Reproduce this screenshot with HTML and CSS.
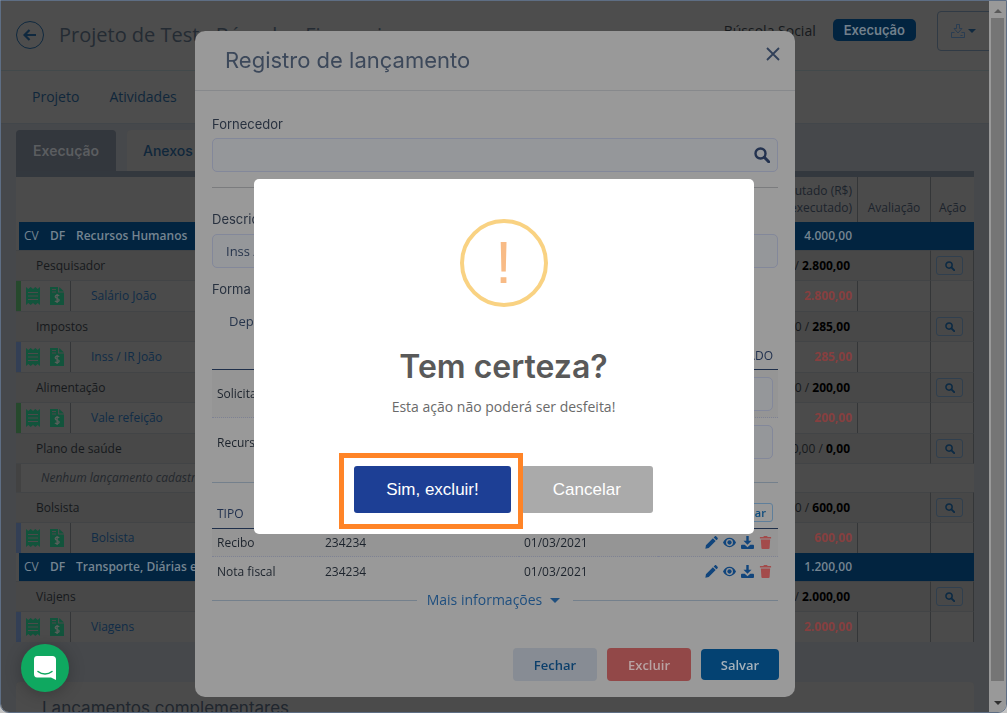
FILE: index.html
```html
<!DOCTYPE html>
<html lang="pt-BR">
<head>
    <meta charset="UTF-8">
    <meta name="viewport" content="width=device-width, initial-scale=1.0">
    <title>Registro de lançamento</title>
    <link rel="stylesheet" href="styles.css">
</head>
<body>
    <!-- Icons used more than once -->
    <svg class="sprite" aria-hidden="true">
        <symbol id="i-search" viewBox="0 0 16 16"><circle cx="6.5" cy="6.5" r="5" fill="none" stroke="currentColor" stroke-width="2.4"/><path d="M10.3 10.3l4.4 4.4" stroke="currentColor" stroke-width="3" stroke-linecap="round"/></symbol>
        <symbol id="i-receipt" viewBox="0 0 14 18"><path fill="currentColor" d="M0 0l2.300 2L4.700 0 7 2 9.300 0l2.400 2L14 0v18l-2.300-2-2.400 2L7 16l-2.300 2-2.400-2L0 18z"/><path d="M2 5.500h10M2 9h10M2 12.500h10" stroke="#4b4b4b" stroke-width="1.200"/></symbol>
        <symbol id="i-invoice" viewBox="0 0 14 18"><path fill="currentColor" d="M0 0h8v5.500h6V18H0z"/><path fill="currentColor" d="M9.200 0L14 4.400H9.200z"/><path d="M2 2.500h4M2 5h4" stroke="#494949" stroke-width="1.100"/><path d="M9.200 8.700C8.300 7.700 5.200 7.900 5.200 9.800c0 2 4 1.400 4 3.300 0 1.800-3.200 2-4.300.7M7.100 7v9" fill="none" stroke="#5a5f5c" stroke-width="1.300"/></symbol>
        <symbol id="i-pencil" viewBox="0 0 14 14"><path fill="currentColor" d="M1 10l7.500-7.500 3 3L4 13l-3.600.6zM9.300 1.700L10.500.5c.5-.5 1.200-.5 1.700 0l1.300 1.300c.5.5.5 1.200 0 1.700l-1.200 1.200z"/></symbol>
        <symbol id="i-eye" viewBox="0 0 14 12"><path fill="currentColor" fill-rule="evenodd" d="M7 1c3 0 5.500 2 7 5-1.500 3-4 5-7 5S1.500 9 0 6c1.500-3 4-5 7-5zm0 1.300a3.700 3.700 0 100 7.400 3.700 3.700 0 000-7.400z"/><circle cx="7" cy="6" r="2.300" fill="currentColor"/></symbol>
        <symbol id="i-download" viewBox="0 0 14 14"><path fill="currentColor" d="M5.700 0h2.600v5h3L7 9.500 2.700 5h3zM1 9.500h3L7 12l3-2.500h3c.6 0 1 .4 1 1V13c0 .6-.4 1-1 1H1c-.6 0-1-.4-1-1v-2.500c0-.6.4-1 1-1z"/></symbol>
        <symbol id="i-trash" viewBox="0 0 12 14"><path fill="currentColor" d="M0 1h3.700L4.300 0h3.400l.6 1H12v1.800H0zM1 3.800h10L10.400 13c0 .6-.5 1-1 1H2.600c-.6 0-1-.4-1-1z"/></symbol>
    </svg>

    <div class="window">
        <main class="page">
            <header class="topbar">
                <button class="back" aria-label="Voltar">
                    <svg width="14" height="12" viewBox="0 0 14 12"><path d="M13 6H2M6.500 1L1.500 6l5 5" fill="none" stroke="currentColor" stroke-width="2.200"/></svg>
                </button>
                <h1>Projeto de Teste Bússola - Financeiro</h1>
                <span class="org">Bússola Social</span>
                <span class="badge">Execução</span>
                <button class="export" aria-label="Exportar">
                    <svg width="14" height="14" viewBox="0 0 14 14"><path d="M5.500.5h3v4h2.500L7 9 3 4.500h2.500zM3.500 8.500h-3v5h13v-5h-3M9.500 11.500h2" fill="none" stroke="#2a3d52"/></svg>
                    <span class="caret"></span>
                </button>
            </header>
            <nav class="menu">
                <a href="#">Projeto</a>
                <a href="#">Atividades</a>
            </nav>
            <section class="content">
                <div class="tabs">
                    <button class="tab active">Execução</button>
                    <button class="tab">Anexos</button>
                </div>
                <table class="budget">
                    <colgroup>
                        <col class="c-mark"><col class="c-cv"><col class="c-df"><col><col class="c-exec"><col class="c-aval"><col class="c-acao">
                    </colgroup>
                    <thead>
                        <tr>
                            <th colspan="4"></th>
                            <th class="num">Executado (R$)<br>(Disponível / executado)</th>
                            <th>Avaliação</th>
                            <th>Ação</th>
                        </tr>
                    </thead>
                    <tbody>
                        <tr class="category"><td></td><td>CV</td><td><b>DF</b></td><td><b>Recursos Humanos</b></td><td class="num"><b>4.000,00</b></td><td></td><td></td></tr>
                        <tr class="group"><td></td><td colspan="3">Pesquisador</td><td class="num">0,00 / <b>2.800,00</b></td><td></td><td><button class="view" aria-label="Ver"><svg><use href="#i-search"/></svg></button></td></tr>
                        <tr class="entry"><td class="green"></td><td><svg><use href="#i-receipt"/></svg></td><td><svg><use href="#i-invoice"/></svg></td><td><a href="#">Salário João</a></td><td class="num">2.800,00</td><td></td><td></td></tr>
                        <tr class="group"><td></td><td colspan="3">Impostos</td><td class="num">0,00 / <b>285,00</b></td><td></td><td><button class="view" aria-label="Ver"><svg><use href="#i-search"/></svg></button></td></tr>
                        <tr class="entry"><td class="blue"></td><td><svg><use href="#i-receipt"/></svg></td><td><svg><use href="#i-invoice"/></svg></td><td><a href="#">Inss / IR João</a></td><td class="num">285,00</td><td></td><td></td></tr>
                        <tr class="group"><td></td><td colspan="3">Alimentação</td><td class="num">0,00 / <b>200,00</b></td><td></td><td><button class="view" aria-label="Ver"><svg><use href="#i-search"/></svg></button></td></tr>
                        <tr class="entry"><td class="green"></td><td><svg><use href="#i-receipt"/></svg></td><td><svg><use href="#i-invoice"/></svg></td><td><a href="#">Vale refeição</a></td><td class="num">200,00</td><td></td><td></td></tr>
                        <tr class="group"><td></td><td colspan="3">Plano de saúde</td><td class="num">0,00 / <b>0,00</b></td><td></td><td><button class="view" aria-label="Ver"><svg><use href="#i-search"/></svg></button></td></tr>
                        <tr class="empty"><td></td><td colspan="6">Nenhum lançamento cadastrado</td></tr>
                        <tr class="group"><td></td><td colspan="3">Bolsista</td><td class="num">0,00 / <b>600,00</b></td><td></td><td><button class="view" aria-label="Ver"><svg><use href="#i-search"/></svg></button></td></tr>
                        <tr class="entry"><td class="blue"></td><td><svg><use href="#i-receipt"/></svg></td><td><svg><use href="#i-invoice"/></svg></td><td><a href="#">Bolsista</a></td><td class="num">600,00</td><td></td><td></td></tr>
                        <tr class="category"><td></td><td>CV</td><td><b>DF</b></td><td><b>Transporte, Diárias e Viagens</b></td><td class="num"><b>1.200,00</b></td><td></td><td></td></tr>
                        <tr class="group"><td></td><td colspan="3">Viajens</td><td class="num">0,00 / <b>2.000,00</b></td><td></td><td><button class="view" aria-label="Ver"><svg><use href="#i-search"/></svg></button></td></tr>
                        <tr class="entry"><td class="blue"></td><td><svg><use href="#i-receipt"/></svg></td><td><svg><use href="#i-invoice"/></svg></td><td><a href="#">Viagens</a></td><td class="num">2.000,00</td><td></td><td></td></tr>
                    </tbody>
                </table>
                <h2 class="extra">Lançamentos complementares</h2>
            </section>
        </main>
        <div class="scrollbar">
            <span class="arrow up"></span>
            <span class="thumb"></span>
            <span class="arrow down"></span>
        </div>
    </div>

    <!-- Entry form -->
    <div class="modal-layer">
        <form class="modal">
            <div class="modal-header">
                <h2>Registro de lançamento</h2>
                <button type="button" class="close" aria-label="Fechar janela">
                    <svg width="14" height="14" viewBox="0 0 14 14"><path d="M1 1l12 12M13 1L1 13" stroke="currentColor" stroke-width="1.800"/></svg>
                </button>
            </div>
            <div class="modal-body">
                <label for="fornecedor">Fornecedor</label>
                <div class="search-field">
                    <input type="text" id="fornecedor">
                    <button type="button" aria-label="Buscar fornecedor"><svg><use href="#i-search"/></svg></button>
                </div>
                <hr>
                <label for="descricao">Descrição</label>
                <input type="text" id="descricao" value="Inss / IR João">
                <label for="forma" class="forma-label">Forma de pagamento</label>
                <select id="forma"><option>Depósito</option></select>
                <table class="sources">
                    <thead><tr><th></th><th>EXECUTADO</th></tr></thead>
                    <tbody>
                        <tr><td><label for="solicitado">Solicitado</label></td><td><input type="text" id="solicitado"></td></tr>
                        <tr><td><label for="recursos">Recursos próprios</label></td><td><input type="text" id="recursos"></td></tr>
                    </tbody>
                </table>
                <hr class="hr-blue">
                <table class="docs">
                    <thead><tr><th class="d-tipo">TIPO</th><th class="d-num">NÚMERO</th><th>DATA</th><th class="d-act"><button type="button" class="add">Adicionar</button></th></tr></thead>
                    <tbody>
                        <tr>
                            <td>Recibo</td><td>234234</td><td>01/03/2021</td>
                            <td class="actions">
                                <div>
                                    <button type="button" aria-label="Editar"><svg><use href="#i-pencil"/></svg></button>
                                    <button type="button" aria-label="Ver"><svg><use href="#i-eye"/></svg></button>
                                    <button type="button" aria-label="Baixar"><svg><use href="#i-download"/></svg></button>
                                    <button type="button" class="red" aria-label="Excluir"><svg><use href="#i-trash"/></svg></button>
                                </div>
                            </td>
                        </tr>
                        <tr>
                            <td>Nota fiscal</td><td>234234</td><td>01/03/2021</td>
                            <td class="actions">
                                <div>
                                    <button type="button" aria-label="Editar"><svg><use href="#i-pencil"/></svg></button>
                                    <button type="button" aria-label="Ver"><svg><use href="#i-eye"/></svg></button>
                                    <button type="button" aria-label="Baixar"><svg><use href="#i-download"/></svg></button>
                                    <button type="button" class="red" aria-label="Excluir"><svg><use href="#i-trash"/></svg></button>
                                </div>
                            </td>
                        </tr>
                    </tbody>
                </table>
                <a href="#" class="more">Mais informações <span class="caret"></span></a>
            </div>
            <div class="modal-footer">
                <button type="button" class="btn light">Fechar</button>
                <button type="button" class="btn danger">Excluir</button>
                <button type="button" class="btn primary">Salvar</button>
            </div>
        </form>
    </div>

    <!-- Confirmation -->
    <div class="alert-layer">
        <div class="alert" role="alertdialog" aria-labelledby="alert-title">
            <div class="alert-icon">!</div>
            <h2 id="alert-title">Tem certeza?</h2>
            <p>Esta ação não poderá ser desfeita!</p>
            <div class="alert-buttons">
                <span class="marked"><button class="confirm">Sim, excluir!</button></span>
                <button class="cancel">Cancelar</button>
            </div>
        </div>
    </div>

    <button class="chat" aria-label="Abrir chat">
        <svg width="24" height="26" viewBox="0 0 24 26"><path fill="#fff" d="M4 1h15.500C21.500 1 23 2.500 23 4.500V25l-5-2.500H4C2 22.500 1 21 1 19V4.500C1 2.500 2 1 4 1z"/><path d="M5 16.500c4 3.200 10 3.200 14 0" fill="none" stroke="#0fa860" stroke-width="1.500" stroke-linecap="round"/></svg>
    </button>
</body>
</html>
```
FILE: styles.css
```css
* {
    box-sizing: border-box;
}
body {
    margin: 0;
    height: 100vh;
    overflow: hidden;
    background: #c4c4c4;
    font-family: "Open Sans", sans-serif;
    font-size: 12px;
    color: #16191c;
}
h1, h2, p {
    margin: 0;
    font-weight: 400;
}
button {
    font-family: inherit;
    padding: 0;
    border: 0;
    background: none;
    cursor: pointer;
}
a {
    text-decoration: none;
}
.sprite {
    position: absolute;
    width: 0;
    height: 0;
}
.caret {
    border: 5px solid transparent;
    border-top-color: currentColor;
    border-bottom: 0;
}

/* Window */
.window {
    display: flex;
    height: 100vh;
    border: 1px solid #5e6e84;
    border-radius: 0 0 9px 9px;
    overflow: hidden;
}
.page {
    flex: 1;
    min-width: 0;
    overflow: hidden;
    background: #46484b;
}
.scrollbar {
    display: flex;
    flex-direction: column;
    align-items: center;
    width: 17px;
    padding: 0 2px;
    background: #999;
}
.scrollbar .thumb {
    flex: 1;
    width: 100%;
    background: #757575;
}
.arrow {
    border: 4px solid transparent;
}
.arrow.up {
    margin: 8px 0 5px;
    border-top: 0;
    border-bottom-color: #5a5a5a;
}
.arrow.down {
    margin: 20px 0 7px;
    border-bottom: 0;
    border-top-color: #303030;
}

/* Page header */
.topbar {
    display: flex;
    align-items: center;
    height: 70px;
    padding: 0 0 2px 15px;
    overflow: hidden;
    background: #4d4d4d;
    border-bottom: 1px solid #42494b;
}
.topbar > * {
    flex-shrink: 0;
}
.back {
    display: flex;
    align-items: center;
    justify-content: center;
    width: 28px;
    height: 28px;
    border: 1px solid #10293f;
    border-radius: 50%;
    color: #10293f;
}
.topbar h1 {
    flex: 1;
    margin-left: 15px;
    font-size: 20px;
    color: #242b33;
}
.org {
    margin-bottom: 9px;
    font-size: 14px;
    color: #16191c;
}
.badge {
    margin: 0 21px 9px 17px;
    padding: 0 11px;
    line-height: 22px;
    border-radius: 5px;
    background: #022440;
    color: #72808c;
    font-family: Inter, sans-serif;
    font-size: 13px;
    font-weight: 600;
}
.export {
    display: flex;
    align-items: center;
    gap: 3px;
    width: 62px;
    height: 40px;
    margin: 0 -10px 8px 0;
    padding-left: 13px;
    border: 1px solid #303a45;
    border-radius: 4px;
    color: #10293f;
}
.export svg {
    flex-shrink: 0;
}
.export .caret {
    border-width: 4px 4px 0;
}
.menu {
    display: flex;
    align-items: center;
    gap: 30px;
    height: 53px;
    padding: 0 31px 2px;
    background: #4d4d4d;
    border-bottom: 1px solid #42464a;
}
.menu a {
    font-size: 14px;
    color: #10273b;
}

/* Content */
.content {
    padding: 6px 15px 0;
}
.tabs {
    display: flex;
    gap: 11px;
    border-bottom: 6px solid #33383e;
}
.tab {
    height: 41px;
    padding: 0 16px;
    border-radius: 4px 4px 0 0;
    background: #4b4b4b;
    color: #10273b;
    font-family: Inter, sans-serif;
    font-size: 14px;
    font-weight: 500;
}
.tab.active {
    min-width: 100px;
    background: #33373d;
    color: #5b5d60;
    font-weight: 600;
}
.budget {
    width: 100%;
    border-collapse: separate;
    border-spacing: 0;
    table-layout: fixed;
    background: #4b4b4b;
}
.c-mark { width: 5px; }
.c-cv { width: 24px; }
.c-df { width: 26px; }
.c-exec { width: 160px; }
.c-aval { width: 73px; }
.c-acao { width: 43px; }
.budget th {
    height: 45px;
    padding: 0 5px 6px;
    border-right: 1px solid #343638;
    font-weight: 400;
    line-height: 17px;
    vertical-align: bottom;
    color: #1c232c;
    white-space: nowrap;
}
.budget th:first-child,
.budget th:last-child {
    border-right: 0;
}
.budget td {
    padding: 0;
    line-height: 20px;
    white-space: nowrap;
}
.budget .num {
    padding-right: 5px;
    text-align: right;
}
.category td {
    height: 28px;
    background: #022440;
    color: #758491;
}
.category td:first-child {
    border-left: 3px solid #4b4b4b;
}
.category td:nth-child(2) {
    padding-left: 3px;
}
.category td:nth-child(3),
.category td:nth-child(4) {
    padding-left: 5px;
}
.budget .category .num {
    padding-right: 6px;
}
.category b {
    font-weight: 600;
}
.group td {
    height: 31px;
    background: #484848;
    border-top: 1px solid #424446;
    border-bottom: 1px solid #424446;
}
.group td:nth-child(2) {
    padding-left: 15px;
}
.budget .group .num {
    padding-right: 8px;
}
.group .num b {
    color: #000;
}
.group td:nth-child(4),
.group td:last-child {
    border-right: 1px solid #343638;
}
.group td:last-child {
    padding-left: 5px;
}
.view {
    display: flex;
    align-items: center;
    justify-content: center;
    width: 27px;
    height: 19px;
    border: 1px solid #303f4e;
    border-radius: 3px;
    color: #0c2a44;
}
.view svg {
    width: 10px;
    height: 10px;
}
.entry td {
    height: 30px;
}
.entry td svg {
    display: block;
    width: 14px;
    height: 18px;
    margin-left: 5px;
    color: #12543c;
}
.entry td:nth-child(3),
.entry td:nth-child(5),
.entry td:nth-child(6),
.entry td:nth-child(7) {
    border-right: 1px solid #343638;
}
.entry td:nth-child(4) {
    padding-left: 20px;
}
.entry a {
    color: #102c47;
}
.entry .num {
    color: #863f3f;
    font-weight: 700;
}
.entry .green { background: #26492d; }
.entry .blue { background: #333f55; }
.empty td {
    height: 28px;
    font-style: italic;
    color: #24282d;
}
.empty td:first-child {
    background: #424242;
}
.empty td:last-child {
    padding-left: 20px;
}
.extra {
    margin-top: 40px;
    padding: 16px 26px;
    border-radius: 4px;
    background: #4b4b4b;
    font-family: Inter, sans-serif;
    font-size: 17px;
    line-height: 20px;
    color: #20262e;
}

/* Modal */
.modal-layer {
    position: fixed;
    inset: 0 17px 0 0;
    display: flex;
    justify-content: center;
    align-items: flex-start;
    padding-top: 31px;
}
.modal {
    width: 600px;
    border-radius: 10px;
    background: #999;
    color: #1c232c;
}
.modal-header {
    display: flex;
    justify-content: space-between;
    align-items: flex-start;
    padding: 16px 15px 16px 30px;
    border-bottom: 1px solid #87898c;
}
.modal-header h2 {
    font-family: Inter, sans-serif;
    font-size: 22px;
    line-height: 27px;
    color: #3c485a;
}
.close {
    height: 14px;
    color: #303f58;
}
.modal-body {
    padding: 24px 17px 0;
}
.modal-body > label {
    display: block;
    font-family: Inter, sans-serif;
    font-size: 13px;
    line-height: 18px;
    color: #28313f;
}
.modal input,
.modal select {
    display: block;
    width: 100%;
    height: 34px;
    padding: 0 13px;
    border: 1px solid #83889a;
    border-radius: 5px;
    background: #95979a;
    font-family: inherit;
    font-size: 13px;
    color: #27354c;
}
.modal select {
    appearance: none;
    padding: 0 16px;
    border-color: transparent;
    background: none;
}
.search-field {
    display: flex;
    margin-top: 5px;
}
.search-field button {
    width: 16px;
    height: 34px;
    margin-left: -24px;
    margin-right: 8px;
    color: #23324f;
}
.search-field svg {
    display: block;
    width: 16px;
    height: 16px;
}
.modal hr {
    height: 1px;
    margin: 15px 0 22px;
    border: 0;
    background: #7b7c7e;
}
.modal-body > #descricao {
    margin-top: 6px;
}
.forma-label {
    margin: 12px 0 6px;
}
.sources,
.docs {
    width: 100%;
    border-collapse: separate;
    border-spacing: 0;
    font-size: 12px;
}
.modal th {
    padding: 0 5px;
    font-weight: 400;
    text-align: left;
    color: #1f2f4d;
    border-bottom: 1px solid #1f2f4a;
}
.modal .sources th {
    height: 32px;
    padding-top: 4px;
    text-align: right;
}
.modal td {
    padding: 0 5px;
}
.sources td {
    height: 48px;
}
.sources td:last-child {
    width: 150px;
}
.modal tbody tr:first-child td {
    background: #959595;
    border-bottom: 1px dotted #7e8294;
}
.modal .hr-blue {
    margin: 16px 0 12px;
    background: #74808c;
}
.docs {
    table-layout: fixed;
}
.modal .docs th {
    height: 34px;
    padding-top: 4px;
}
.d-tipo { width: 108px; }
.d-num { width: 199px; }
.modal .docs .d-act {
    width: 120px;
    padding-top: 2px;
    text-align: right;
}
.add {
    height: 19px;
    padding: 0 6px;
    border: 1px solid #5f7f9b;
    border-radius: 3px;
    color: #0b4a7c;
    font-size: 11px;
    font-weight: 600;
}
.docs td {
    height: 28px;
    font-size: 12px;
}
.actions div {
    display: flex;
    justify-content: flex-end;
    gap: 5px;
    padding-right: 1px;
}
.actions button {
    color: #11457c;
}
.actions button.red {
    color: #a34b4b;
}
.actions svg {
    display: block;
    width: 13px;
    height: 13px;
}
.more {
    display: flex;
    align-items: center;
    gap: 8px;
    margin-top: 5px;
    line-height: 20px;
    font-size: 14px;
    color: #1f4f7f;
}
.more::before,
.more::after {
    content: "";
    flex: 1;
    height: 1px;
    background: #74808c;
}
.more::before {
    margin-right: 2px;
}
.more::after {
    margin-left: 5px;
}
.modal-footer {
    display: flex;
    justify-content: flex-end;
    align-items: center;
    gap: 10px;
    padding: 38px 16px 16px;
}
.btn {
    width: 84px;
    height: 33px;
    border-radius: 4px;
    font-size: 13px;
    font-weight: 600;
}
.btn.light {
    background: #878c94;
    color: #0c3f6b;
}
.btn.danger {
    background: #924848;
    color: #b8a3a3;
}
.btn.primary {
    width: 78px;
    height: 31px;
    background: #044272;
    color: #a5b1bb;
}

/* Alert */
.alert-layer {
    position: fixed;
    inset: 0;
    display: flex;
    justify-content: center;
    align-items: center;
}
.alert {
    display: flex;
    flex-direction: column;
    align-items: center;
    width: 500px;
    padding: 40px 20px 21px;
    border-radius: 5px;
    background: #fff;
}
.alert-icon {
    width: 88px;
    height: 88px;
    border: 4px solid #f9d282;
    border-radius: 50%;
    font-family: "Liberation Sans", sans-serif;
    font-size: 60px;
    line-height: 80px;
    text-align: center;
    color: #f8bb86;
}
.alert h2 {
    margin-top: 41px;
    font-family: Inter, sans-serif;
    font-size: 32px;
    font-weight: 600;
    line-height: 38px;
    color: #595959;
}
.alert p {
    margin-top: 11px;
    font-size: 14px;
    line-height: 20px;
    color: #6a6a6a;
}
.alert-buttons {
    display: flex;
    gap: 10px;
    margin-top: 49px;
}
.alert-buttons button {
    display: block;
    height: 47px;
    padding: 0 32px;
    border-radius: 3px;
    font-family: "Liberation Sans", sans-serif;
    font-size: 17px;
    color: #fff;
}
.confirm {
    background: #1d3f95;
}
.cancel {
    background: #aaa;
}
.marked {
    position: relative;
    z-index: 1;
}
.marked::after {
    content: "";
    position: absolute;
    inset: -13px -12px -16px -15px;
    border: 5px solid #ff8427;
    pointer-events: none;
}

/* Chat */
.chat {
    position: fixed;
    left: 21px;
    bottom: 21px;
    display: flex;
    align-items: center;
    justify-content: center;
    width: 48px;
    height: 48px;
    border-radius: 50%;
    background: #0fa860;
    box-shadow: 0 2px 16px rgba(0, 0, 0, 0.25);
}
```
